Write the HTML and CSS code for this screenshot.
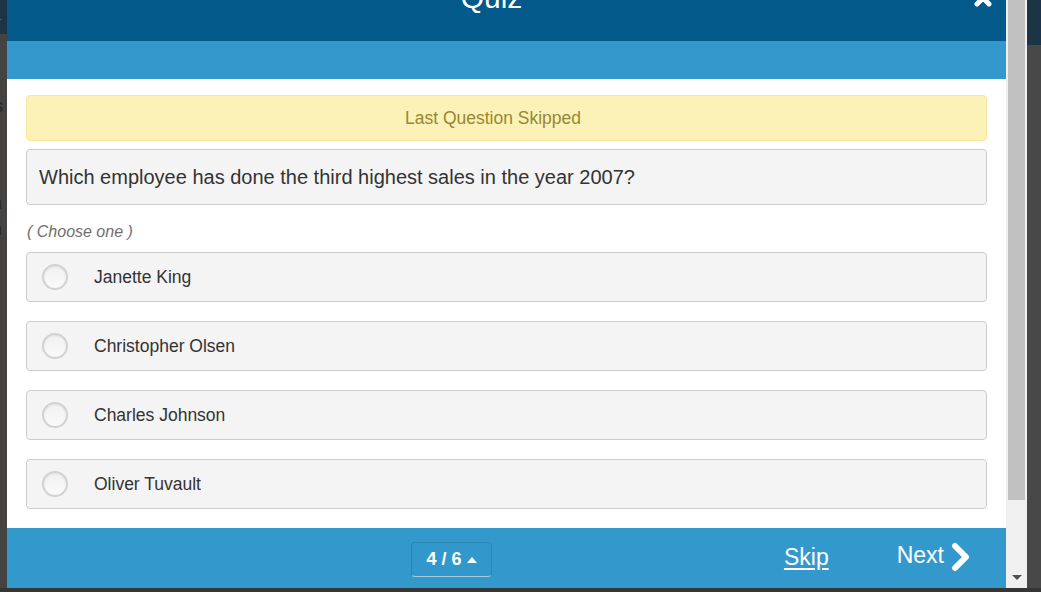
FILE: index.html
```html
<!DOCTYPE html>
<html>
<head>
<meta charset="utf-8">
<link rel="stylesheet" href="styles.css">
</head>
<body>
<div class="screen">
  <div class="main">
    <div class="side side-left">
      <div class="side-top"><span class="frag dash">-</span></div>
      <div class="side-rest">
        <span class="frag f1">s</span>
        <span class="frag f2">n</span>
        <span class="frag f3">n</span>
      </div>
    </div>
    <div class="frame">
      <div class="modal">
        <div class="modal-header">
          <h1 class="title">Quiz</h1>
          <span class="close">
            <svg width="20" height="20" viewBox="0 0 20 20"><path d="M4 4 L16 16 M16 4 L4 16" stroke="#fff" stroke-width="5" stroke-linecap="round"/></svg>
          </span>
        </div>
        <div class="band"></div>
        <div class="content">
          <div class="alert">Last Question Skipped</div>
          <div class="question">Which employee has done the third highest sales in the year 2007?</div>
          <div class="hint">( Choose one )</div>
          <div class="options">
            <label class="option"><span class="radio"></span><span class="opt-text">Janette King</span></label>
            <label class="option"><span class="radio"></span><span class="opt-text">Christopher Olsen</span></label>
            <label class="option"><span class="radio"></span><span class="opt-text">Charles Johnson</span></label>
            <label class="option"><span class="radio"></span><span class="opt-text">Oliver Tuvault</span></label>
          </div>
        </div>
        <div class="footer">
          <button class="pager">4 / 6 <svg width="10" height="6" viewBox="0 0 10 6"><path d="M0 6 L5 0 L10 6 Z" fill="#fff"/></svg></button>
          <a class="skip">Skip</a>
          <a class="next">Next <svg class="chev" width="22" height="30" viewBox="0 0 22 30"><path d="M5 4 L16 15 L5 26" fill="none" stroke="#fff" stroke-width="6" stroke-linecap="round" stroke-linejoin="round"/></svg></a>
        </div>
      </div>
      <div class="scrollbar">
        <div class="thumb"></div>
        <div class="track"></div>
        <div class="arrow"></div>
      </div>
    </div>
    <div class="side side-right">
      <div class="side-top tall"></div>
      <div class="side-rest"></div>
    </div>
  </div>
  <div class="bottom"></div>
</div>
</body>
</html>
```
FILE: styles.css
```css
* { box-sizing: border-box; }
html, body { margin: 0; padding: 0; }
body {
  width: 1041px;
  height: 592px;
  overflow: hidden;
  background: #454545;
  font-family: "Liberation Sans", Arial, sans-serif;
}
.screen { display: flex; flex-direction: column; height: 592px; }
.main { display: flex; height: 588px; flex-shrink: 0; }
.bottom { height: 4px; background: #353535; flex-shrink: 0; }

.side { display: flex; flex-direction: column; overflow: hidden; flex-shrink: 0; }
.side-left { width: 7px; }
.side-right { width: 14px; }
.side-top { height: 34px; background: #1b3446; position: relative; flex-shrink: 0; }
.side-top.tall { height: 45px; }
.side-rest { flex: 1; background: #454341; position: relative; }
.side-right .side-rest { background: #484848; }
.frag { position: absolute; color: #262626; font-size: 18px; line-height: 18px; }
.dash { left: -3px; top: 10px; color: #4d6b80; font-size: 14px; }
.f1 { left: -6px; top: 63px; }
.f2 { left: -8px; top: 160px; }
.f3 { left: -8px; top: 186px; }

.frame { width: 1020px; display: flex; flex-shrink: 0; }
.modal { width: 999px; display: flex; flex-direction: column; background: #fff; flex-shrink: 0; }

.modal-header {
  height: 41px;
  flex-shrink: 0;
  background: #02598a;
  position: relative;
  overflow: hidden;
}
.title {
  margin: -17px 0 0 0;
  padding-right: 30px;
  text-align: center;
  color: #fff;
  font-weight: normal;
  font-size: 30px;
  line-height: 30px;
}
.close { position: absolute; left: 966px; top: -12px; }

.band { height: 38px; flex-shrink: 0; background: #3498cc; }

.content {
  height: 449px;
  flex-shrink: 0;
  padding: 16px 19px 19px 19px;
  display: flex;
  flex-direction: column;
}
.alert {
  height: 46px;
  flex-shrink: 0;
  background: #fcf2b8;
  border: 1px solid #f8e6a0;
  border-radius: 4px;
  color: #97882f;
  font-size: 17.5px;
  display: flex;
  align-items: center;
  justify-content: center;
  padding-right: 27px;
}
.question {
  margin-top: 8px;
  height: 56px;
  flex-shrink: 0;
  background: #f4f4f4;
  border: 1px solid #cccccc;
  border-radius: 4px;
  padding: 0 12px;
  display: flex;
  align-items: center;
  color: #333;
  font-size: 20px;
}
.hint {
  margin-top: 18px;
  height: 29px;
  flex-shrink: 0;
  font-style: italic;
  color: #6f6f6f;
  font-size: 16px;
  line-height: 18px;
  padding-left: 1px;
}
.options { display: flex; flex-direction: column; gap: 19px; }
.option {
  height: 50px;
  flex-shrink: 0;
  background: #f4f4f4;
  border: 1px solid #cccccc;
  border-radius: 4px;
  display: flex;
  align-items: center;
  padding-left: 15px;
}
.radio {
  width: 26px;
  height: 26px;
  flex-shrink: 0;
  border-radius: 50%;
  border: 2px solid #d2d2d2;
  background: linear-gradient(#f1f1f1, #fafafa);
  box-shadow: inset 0 1px 2px rgba(0,0,0,0.08);
  margin-right: 26px;
}
.opt-text { color: #333; font-size: 17.5px; }

.footer {
  height: 60px;
  flex-shrink: 0;
  background: #3399cc;
  display: flex;
  align-items: center;
  padding-left: 404px;
  padding-right: 34px;
}
.pager {
  width: 81px;
  height: 35px;
  margin-top: 3px;
  background: #3298cb;
  border: 1px solid rgba(0,0,0,0.12);
  border-bottom-color: #a6c7dc;
  border-radius: 4px;
  color: #fff;
  font-family: "Liberation Sans", Arial, sans-serif;
  font-weight: bold;
  font-size: 18px;
  display: flex;
  align-items: center;
  justify-content: center;
  gap: 5px;
  padding: 0;
}
.skip {
  margin-left: auto;
  color: #fff;
  font-size: 23px;
  text-decoration: underline;
  text-underline-offset: 3px;
  margin-top: -2px;
}
.next {
  margin-left: 68px;
  color: #fff;
  font-size: 23px;
  display: flex;
  align-items: center;
  gap: 6px;
  margin-top: -5px;
}
.chev { margin-top: 2px; }

.scrollbar {
  width: 21px;
  flex-shrink: 0;
  background: #f0f0f0;
  display: flex;
  flex-direction: column;
  align-items: center;
}
.thumb { width: 17px; height: 500px; flex-shrink: 0; background: #c1c1c1; }
.track { flex: 1; }
.arrow {
  width: 0; height: 0;
  border-left: 5px solid transparent;
  border-right: 5px solid transparent;
  border-top: 5px solid #505050;
  margin-bottom: 8px;
}
```
